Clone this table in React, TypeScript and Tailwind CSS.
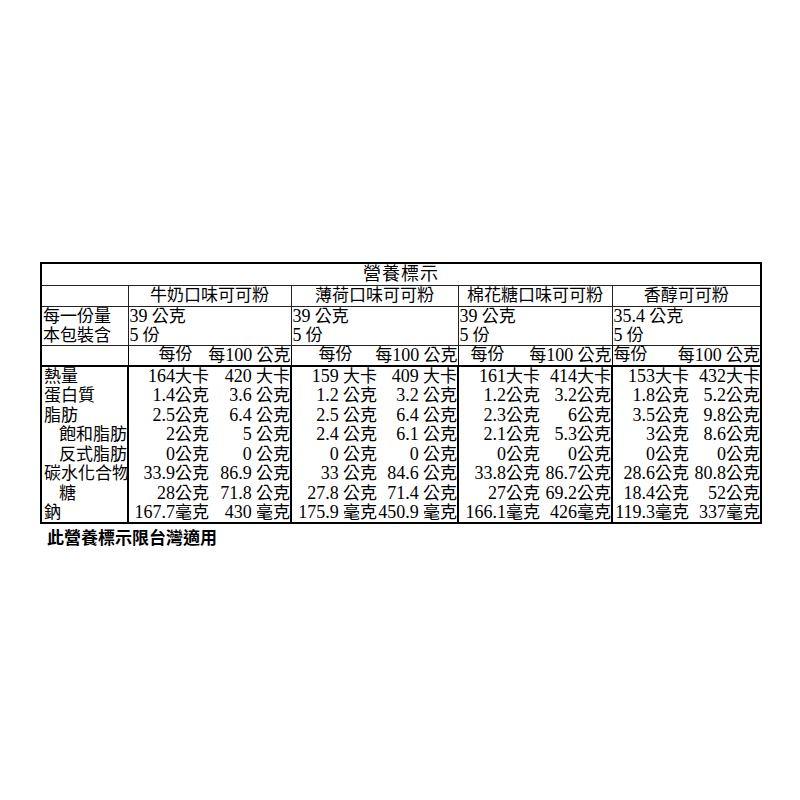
const flavors = ["牛奶口味可可粉", "薄荷口味可可粉", "棉花糖口味可可粉", "香醇可可粉"]

const serving = ["39 公克", "39 公克", "39 公克", "35.4 公克"]

const perPad = ["pl-[30px]", "pl-[27px]", "pl-[12px]", "pl-[1px]"]

const rows: { label: string; indent?: boolean; values: string[] }[] = [
  { label: "熱量", values: ["164大卡", "420 大卡", "159 大卡", "409 大卡", "161大卡", "414大卡", "153大卡", "432大卡"] },
  { label: "蛋白質", values: ["1.4公克", "3.6 公克", "1.2 公克", "3.2 公克", "1.2公克", "3.2公克", "1.8公克", "5.2公克"] },
  { label: "脂肪", values: ["2.5公克", "6.4 公克", "2.5 公克", "6.4 公克", "2.3公克", "6公克", "3.5公克", "9.8公克"] },
  { label: "飽和脂肪", indent: true, values: ["2公克", "5 公克", "2.4 公克", "6.1 公克", "2.1公克", "5.3公克", "3公克", "8.6公克"] },
  { label: "反式脂肪", indent: true, values: ["0公克", "0 公克", "0 公克", "0 公克", "0公克", "0公克", "0公克", "0公克"] },
  { label: "碳水化合物", values: ["33.9公克", "86.9 公克", "33 公克", "84.6 公克", "33.8公克", "86.7公克", "28.6公克", "80.8公克"] },
  { label: "糖", indent: true, values: ["28公克", "71.8 公克", "27.8 公克", "71.4 公克", "27公克", "69.2公克", "18.4公克", "52公克"] },
  { label: "鈉", values: ["167.7毫克", "430 毫克", "175.9 毫克", "450.9 毫克", "166.1毫克", "426毫克", "119.3毫克", "337毫克"] },
]

// digits are drawn a bit larger, like the half-width digits of the original
function Val({ v }: { v: string }) {
  const m = v.match(/^([\d.]+)(.*)$/)
  if (!m) return <>{v}</>
  return (
    <>
      <span className="text-[18px]">{m[1]}</span>
      {m[2]}
    </>
  )
}

export default function App() {
  return (
    <div className="w-[800px] h-[800px] bg-white pt-[262px] pl-[40px] text-black font-['Liberation_Serif','Noto_Sans_CJK_TC',serif] text-[17px]">
      <table className="table-fixed border-collapse border-2 border-black w-[720px]">
        <colgroup>
          <col className="w-[87px]" />
          <col className="w-[81px]" />
          <col className="w-[82px]" />
          <col className="w-[86px]" />
          <col className="w-[81px]" />
          <col className="w-[82px]" />
          <col className="w-[72px]" />
          <col className="w-[77px]" />
          <col className="w-[72px]" />
        </colgroup>
        <tbody>
          <tr className="h-[22px]">
            <td colSpan={9} className="p-0 text-center leading-none text-[18px] tracking-[1px] border-b border-[#222]">
              營養標示
            </td>
          </tr>
          <tr className="h-[21px]">
            <td className="p-0 border-r border-b border-[#222]"></td>
            {flavors.map((f) => (
              <td key={f} colSpan={2} className="p-0 text-center leading-none border-r border-b border-[#222]">
                {f}
              </td>
            ))}
          </tr>
          <tr className="h-[39px]">
            <td className="p-0 pl-[1px] align-top leading-[19px] border-r border-b border-[#222] whitespace-nowrap">
              每一份量
              <br />
              本包裝含
            </td>
            {serving.map((s, i) => (
              <td key={i} colSpan={2} className="p-0 pl-[1px] align-top leading-[19px] border-r border-b border-[#222] whitespace-pre">
                <Val v={s} />
                <br />
                <Val v="5 份" />
              </td>
            ))}
          </tr>
          <tr className="h-[21px]">
            <td className="p-0 border-r border-b-2 border-black"></td>
            {perPad.map((p, i) => (
              <td key={i} colSpan={2} className="p-0 border-r border-b-2 border-black leading-none">
                <div className={`flex justify-between ${p}`}>
                  <span>每份</span>
                  <span className="whitespace-pre">
                    每<span className="text-[18px]">100</span> 公克
                  </span>
                </div>
              </td>
            ))}
          </tr>
          {rows.map((r, ri) => (
            <tr key={r.label} className="h-[19.5px]">
              <td
                className={`p-0 leading-[19px] whitespace-nowrap border-r-2 border-black ${r.indent ? "pl-[17px]" : "pl-[2px]"} ${ri === rows.length - 1 ? "border-b-2" : ""}`}
              >
                {r.label}
              </td>
              {r.values.map((v, vi) => (
                <td
                  key={vi}
                  className={`p-0 text-right leading-[19px] whitespace-pre ${vi % 2 === 1 ? "border-r-2 border-black" : ""}`}
                >
                  <Val v={v} />
                </td>
              ))}
            </tr>
          ))}
        </tbody>
      </table>
      <div className="mt-[3px] pl-[7px] font-bold text-[17px] leading-[20px] font-['Noto_Sans_CJK_TC',sans-serif]">
        此營養標示限台灣適用
      </div>
    </div>
  )
}
